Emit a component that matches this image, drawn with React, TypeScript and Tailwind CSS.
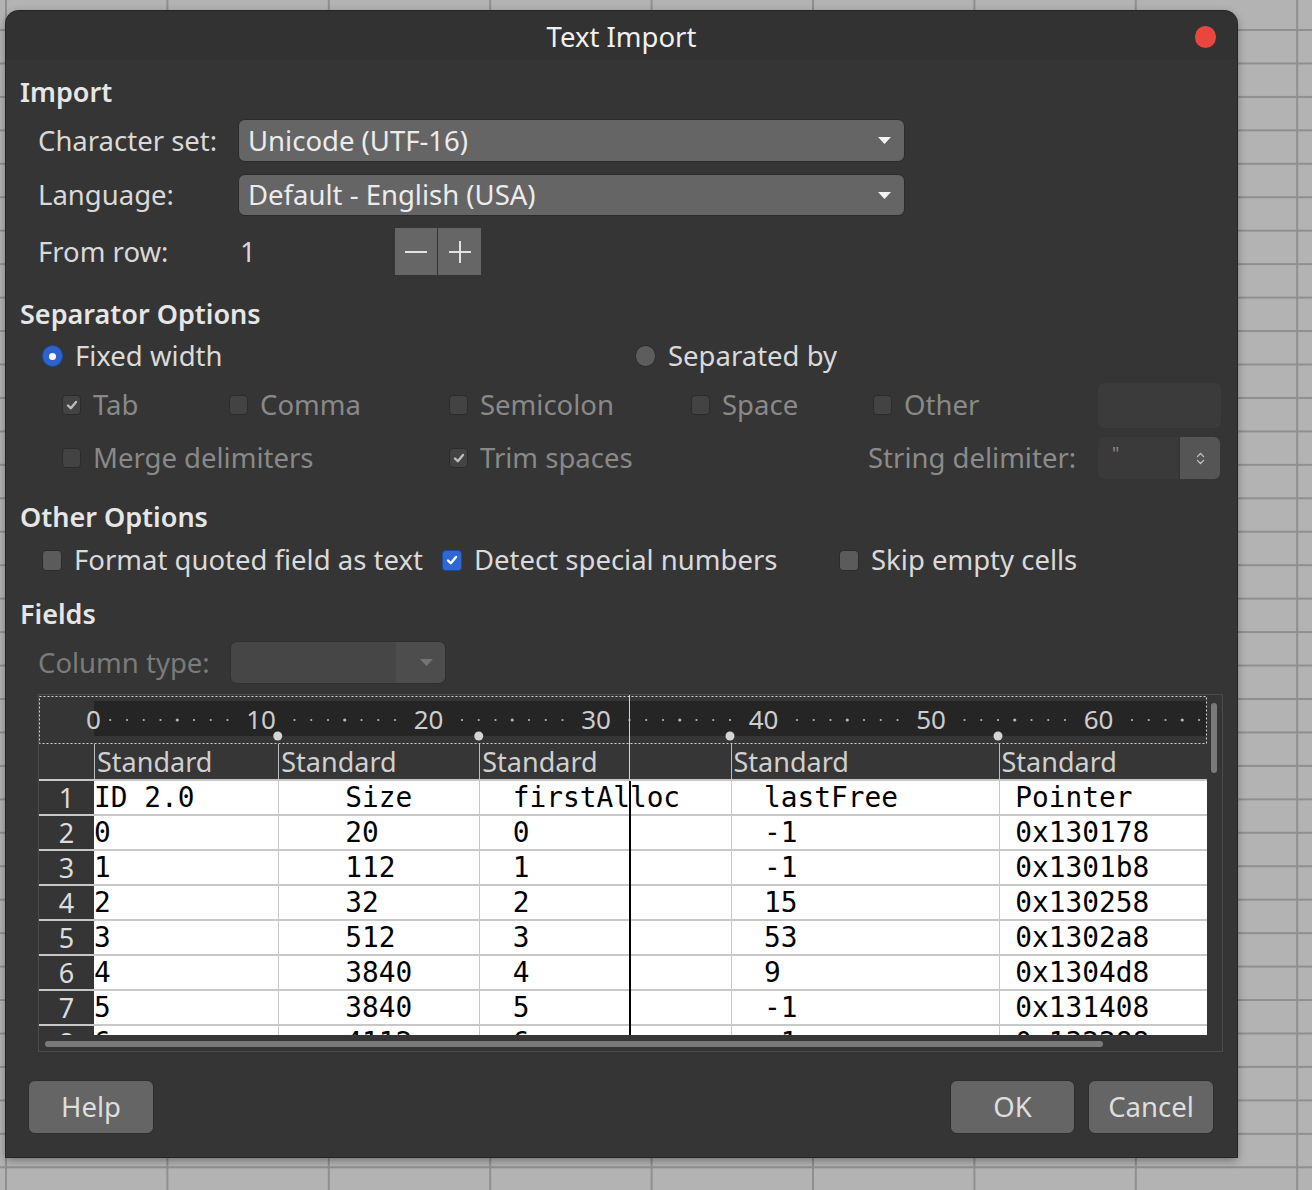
import { ChevronsUpDown } from "lucide-react";

const ui = "font-['Noto_Sans',sans-serif]";
const mono = "font-['DejaVu_Sans_Mono',monospace]";

const rows = [
  ["1", "ID 2.0", "Size", "firstAlloc", "lastFree", "Pointer"],
  ["2", "0", "20", "0", "-1", "0x130178"],
  ["3", "1", "112", "1", "-1", "0x1301b8"],
  ["4", "2", "32", "2", "15", "0x130258"],
  ["5", "3", "512", "3", "53", "0x1302a8"],
  ["6", "4", "3840", "4", "9", "0x1304d8"],
  ["7", "5", "3840", "5", "-1", "0x131408"],
  ["8", "6", "4112", "6", "-1", "0x132288"],
];

const colW = ["w-[184.25px]", "w-[201px]", "w-[251.25px]", "w-[268px]", "w-[208.5px]"];
const colPad = ["pl-0", "pl-[66px]", "pl-[32.5px]", "pl-[32.5px]", "pl-[15.75px]"];

function GridBg() {
  return (
    <svg className="absolute inset-0" width="1312" height="1190">
      <defs>
        <pattern id="sheet" x="5" y="-4.45" width="161.4" height="33.45" patternUnits="userSpaceOnUse">
          <rect width="161.4" height="33.45" fill="#b3b3b3" />
          <rect x="0" y="0" width="2" height="33.45" fill="#8f8f8f" />
          <rect x="0" y="0" width="161.4" height="2" fill="#8f8f8f" />
        </pattern>
      </defs>
      <rect width="1312" height="1190" fill="url(#sheet)" />
    </svg>
  );
}

function Tick({ color }: { color: string }) {
  return (
    <svg width="12" height="12" viewBox="0 0 12 12">
      <path d="M2 6.5 L4.8 9.2 L10 3" fill="none" stroke={color} strokeWidth="2.4" strokeLinecap="round" strokeLinejoin="round" />
    </svg>
  );
}

function Box({ checked = false, disabled = false, blue = false }: { checked?: boolean; disabled?: boolean; blue?: boolean }) {
  const look = blue
    ? "bg-[#2f67d4] border-[#1d4ba3] w-[20px] h-[21px]"
    : disabled
    ? "bg-[#434343] border-[#2b2b2b] w-[19px] h-[20px]"
    : "bg-[#5b5b5b] border-[#2a2a2a] w-[20px] h-[21px]";
  return (
    <span className={`shrink-0 flex items-center justify-center rounded-[4px] border ${look}`}>
      {checked && <Tick color={blue ? "#ffffff" : "#bcbcbc"} />}
    </span>
  );
}

function Opt({ w, label, checked = false, disabled = false, blue = false }: { w: string; label: string; checked?: boolean; disabled?: boolean; blue?: boolean }) {
  return (
    <div className={`${w} shrink-0 flex items-center gap-[12px]`}>
      <Box checked={checked} disabled={disabled} blue={blue} />
      <span className={`text-[27.5px] leading-none whitespace-nowrap ${disabled ? "text-[#898989]" : "text-[#dadada]"}`}>{label}</span>
    </div>
  );
}

function Radio({ on }: { on: boolean }) {
  if (on)
    return (
      <span className="shrink-0 flex items-center justify-center w-[21px] h-[22px] rounded-full bg-[#2d63cb] border border-[#1c489a]">
        <span className="w-[7px] h-[7px] rounded-full bg-white" />
      </span>
    );
  return <span className="shrink-0 w-[21px] h-[22px] rounded-full bg-[#5d5d5d] border border-[#2b2b2b]" />;
}

function Arrow({ color }: { color: string }) {
  return (
    <svg width="13" height="7" viewBox="0 0 13 7">
      <polygon points="0,0 13,0 6.5,7" fill={color} />
    </svg>
  );
}

function Combo({ text }: { text: string }) {
  return (
    <div className="w-[667px] h-full rounded-[7px] bg-[#656565] border border-[#2b2b2b] flex items-center justify-between pl-[9px] pr-[13px]">
      <span className="text-[27.5px] leading-none text-[#ececec] whitespace-nowrap">{text}</span>
      <Arrow color="#f2f2f2" />
    </div>
  );
}

function Heading({ text, h, pt }: { text: string; h: string; pt: string }) {
  return (
    <div className={`${h} ${pt} shrink-0 flex items-center pl-[14px]`}>
      <span className="text-[27px] font-semibold leading-none text-[#e6e6e6]">{text}</span>
    </div>
  );
}

function Ruler() {
  const dots: number[] = [];
  for (let i = 1; i <= 66; i++) {
    if (i % 10 === 0 || i % 10 === 9 || (i % 10 === 1 && i > 10)) continue;
    dots.push(i);
  }
  const nums = [0, 1, 2, 3, 4, 5, 6];
  return (
    <div className="relative h-[49px] shrink-0">
      <svg className="absolute inset-0" width="1168" height="49">
        <rect x="55" y="6" width="1113" height="35" fill="#252525" />
        <rect x="0.5" y="1.5" width="1167" height="47" fill="none" stroke="#d6d6d6" strokeDasharray="2 2" />
        {dots.map((i) => (
          <circle key={i} cx={54.5 + 16.75 * i} cy="25" r={i % 10 === 5 ? 1.6 : 1.1} fill="#b8b8b8" />
        ))}
        <line x1="590.5" y1="0" x2="590.5" y2="49" stroke="#d2d2d2" strokeWidth="1" />
        {[11, 23, 38, 54].map((i) => (
          <circle key={i} cx={54.5 + 16.75 * i} cy="41" r="4.5" fill="#d4d4d4" />
        ))}
      </svg>
      {nums.map((k) => (
        <span
          key={k}
          className="absolute top-0 h-[48px] flex items-center -translate-x-1/2 text-[26px] leading-none text-[#cdcdcd]"
          style={{ left: 54.5 + 167.5 * k }}
        >
          {k * 10}
        </span>
      ))}
    </div>
  );
}

function Preview() {
  return (
    <div className="mt-[10px] ml-[32px] w-[1185px] h-[358px] shrink-0 border border-[#4b4b4b] flex">
      <div className="relative w-[1168px] shrink-0 flex flex-col">
        <Ruler />
        <div className="h-[37px] shrink-0 flex border-b-2 border-[#c8c8c8] bg-[#363636]">
          <div className="w-[55px] shrink-0" />
          {colW.map((w, j) => (
            <div key={j} className={`${w} shrink-0 border-l border-[#bdbdbd] pl-[2px] flex items-center`}>
              <span className="text-[27px] leading-[35px] text-[#d0d0d0]">Standard</span>
            </div>
          ))}
        </div>
        <div className="h-[254px] shrink-0 [clip-path:inset(-4px_0_0_0)]">
          {rows.map((r) => (
            <div key={r[0]} className="flex h-[35px] shrink-0 border-b-2 border-[#c8c8c8]">
              <div className="w-[55px] shrink-0 bg-[#353535] text-center text-[27px] leading-[33px] text-[#dcdcdc]">{r[0]}</div>
              {r.slice(1).map((c, j) => (
                <div
                  key={j}
                  className={`${colW[j]} ${colPad[j]} shrink-0 bg-white ${j > 0 ? "border-l border-[#c8c8c8]" : ""} ${mono} text-[27.8px] leading-[33px] text-black whitespace-pre`}
                >
                  {c}
                </div>
              ))}
            </div>
          ))}
        </div>
        <div className="h-[16px] shrink-0 pt-[6px] pl-[6px] bg-[#353535]">
          <div className="w-[1058px] h-[6px] rounded-full bg-[#7a7a7a]" />
        </div>
        <div className="absolute left-[590px] top-[49px] h-[35px] w-px bg-[#d2d2d2]" />
        <div className="absolute left-[590px] top-[86px] h-[254px] w-[2px] bg-black" />
      </div>
      <div className="w-[15px] shrink-0 pt-[8px] pl-[4px]">
        <div className="w-[6px] h-[70px] rounded-full bg-[#7a7a7a]" />
      </div>
    </div>
  );
}

function Btn({ w, text }: { w: string; text: string }) {
  return (
    <div className={`${w} h-[54px] rounded-[7px] bg-[#656565] border border-[#2d2d2d] flex items-center justify-center text-[27.5px] leading-none text-[#dedede]`}>
      {text}
    </div>
  );
}

export default function App() {
  return (
    <div className={`relative w-[1312px] h-[1190px] overflow-hidden bg-[#b3b3b3] ${ui}`}>
      <GridBg />
      <div className="relative pt-[11px] pl-[6px]">
        <div className="w-[1231px] h-[1146px] rounded-t-[13px] bg-[#353535] shadow-[0_0_0_1px_#252525,0_3px_10px_rgba(0,0,0,0.4)] overflow-hidden flex flex-col">
          {/* title bar */}
          <div className="relative h-[49px] shrink-0 flex items-center justify-center pt-[3px] bg-[#323232]">
            <span className="text-[27.5px] leading-none text-[#f0f0f0]">Text Import</span>
            <span className="absolute right-[21px] top-[15px] w-[21px] h-[22px] rounded-full bg-[#e8463f]" />
          </div>

          <Heading text="Import" h="h-[59px]" pt="pt-[4px]" />
          <div className="h-[43px] shrink-0 flex items-center pl-[32px]">
            <span className="w-[200px] shrink-0 text-[27.5px] leading-none text-[#d9d9d9]">Character set:</span>
            <Combo text="Unicode (UTF-16)" />
          </div>
          <div className="mt-[12px] h-[42px] shrink-0 flex items-center pl-[32px]">
            <span className="w-[200px] shrink-0 text-[27.5px] leading-none text-[#d9d9d9]">Language:</span>
            <Combo text="Default - English (USA)" />
          </div>
          <div className="mt-[12px] h-[47px] shrink-0 flex items-center pl-[32px]">
            <span className="w-[202px] shrink-0 text-[27.5px] leading-none text-[#d9d9d9]">From row:</span>
            <span className="w-[155px] shrink-0 text-[27.5px] leading-none text-[#d9d9d9]">1</span>
            <div className="h-full flex gap-px">
              <div className="w-[42px] h-full bg-[#666666] flex items-center justify-center">
                <svg width="22" height="2"><rect width="22" height="2" fill="#e2e2e2" /></svg>
              </div>
              <div className="w-[43px] h-full bg-[#666666] flex items-center justify-center">
                <svg width="22" height="22">
                  <rect x="0" y="10" width="22" height="2" fill="#e2e2e2" />
                  <rect x="10" y="0" width="2" height="22" fill="#e2e2e2" />
                </svg>
              </div>
            </div>
          </div>

          <Heading text="Separator Options" h="mt-[15px] h-[46px]" pt="pt-0" />
          <div className="h-[40px] shrink-0 flex items-center pl-[36px]">
            <div className="w-[593px] shrink-0 flex items-center gap-[12px]">
              <Radio on />
              <span className="text-[27.5px] leading-none text-[#dadada]">Fixed width</span>
            </div>
            <div className="flex items-center gap-[12px]">
              <Radio on={false} />
              <span className="text-[27.5px] leading-none text-[#dadada]">Separated by</span>
            </div>
          </div>
          <div className="mt-[6px] h-[46px] shrink-0 flex items-center pl-[56px]">
            <Opt w="w-[167px]" label="Tab" checked disabled />
            <Opt w="w-[220px]" label="Comma" disabled />
            <Opt w="w-[242px]" label="Semicolon" disabled />
            <Opt w="w-[182px]" label="Space" disabled />
            <Opt w="w-[225px]" label="Other" disabled />
            <div className="w-[123px] h-[45px] shrink-0 rounded-[6px] bg-[#3b3b3b]" />
          </div>
          <div className="mt-[8px] h-[44px] shrink-0 flex items-center pl-[56px]">
            <Opt w="w-[387px]" label="Merge delimiters" disabled />
            <Opt w="w-[419px]" label="Trim spaces" checked disabled />
            <span className="w-[230px] shrink-0 text-[27.5px] leading-none text-[#8b8b8b]">String delimiter:</span>
            <div className="h-[42px] flex">
              <div className="w-[80px] h-full rounded-l-[6px] bg-[#3a3a3a] pl-[14px] pt-[7px] text-[18px] leading-none text-[#8a8a8a]">"</div>
              <div className="ml-[2px] w-[40px] h-full rounded-r-[6px] bg-[#555555] flex items-center justify-center">
                <ChevronsUpDown size={15} strokeWidth={2} color="#c4c4c4" />
              </div>
            </div>
          </div>

          <Heading text="Other Options" h="mt-[14px] h-[44px]" pt="pt-0" />
          <div className="mt-[2px] h-[40px] shrink-0 flex items-center pl-[36px]">
            <Opt w="w-[400px]" label="Format quoted field as text" />
            <Opt w="w-[397px]" label="Detect special numbers" checked blue />
            <Opt w="w-[300px]" label="Skip empty cells" />
          </div>

          <Heading text="Fields" h="mt-[12px] h-[42px]" pt="pt-0" />
          <div className="mt-[7px] h-[43px] shrink-0 flex items-center pl-[32px]">
            <span className="w-[192px] shrink-0 text-[27.5px] leading-none text-[#7b7b7b]">Column type:</span>
            <div className="w-[216px] h-full flex rounded-[7px] border border-[#2f2f2f] overflow-hidden">
              <div className="w-[165px] h-full bg-[#464646]" />
              <div className="flex-1 h-full bg-[#4d4d4d] flex items-center justify-end pr-[12px]">
                <Arrow color="#747474" />
              </div>
            </div>
          </div>

          <Preview />

          <div className="mt-[28px] h-[54px] shrink-0 flex justify-between pl-[22px] pr-[23px]">
            <Btn w="w-[126px]" text="Help" />
            <div className="flex gap-[13px]">
              <Btn w="w-[125px]" text="OK" />
              <Btn w="w-[126px]" text="Cancel" />
            </div>
          </div>
        </div>
      </div>
    </div>
  );
}
